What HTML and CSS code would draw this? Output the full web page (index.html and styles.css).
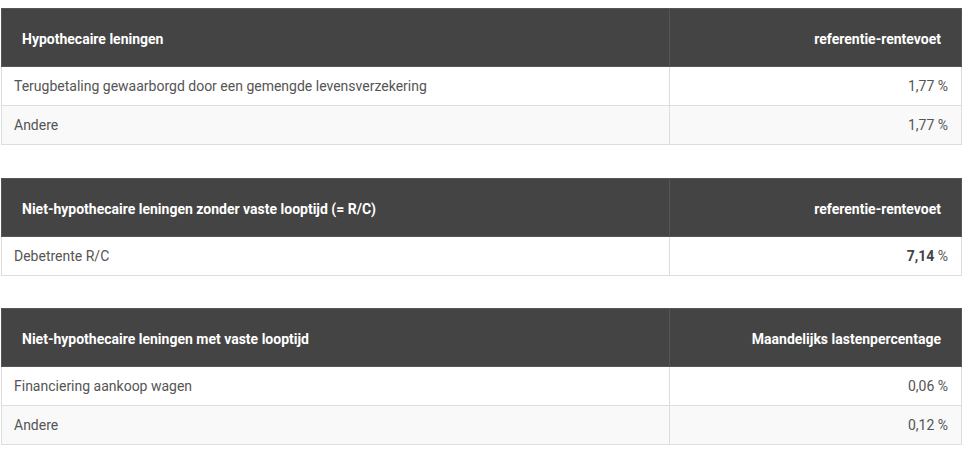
FILE: index.html
```html
<!DOCTYPE html>
<html lang="nl">
<head>
<meta charset="utf-8">
<link rel="stylesheet" href="styles.css">
</head>
<body>
<div class="page">
  <table class="rates rates-first">
    <colgroup><col class="c1"><col class="c2"></colgroup>
    <thead>
      <tr><th>Hypothecaire leningen</th><th class="num">referentie-rentevoet</th></tr>
    </thead>
    <tbody>
      <tr><td>Terugbetaling gewaarborgd door een gemengde levensverzekering</td><td class="num">1,77 %</td></tr>
      <tr><td>Andere</td><td class="num">1,77 %</td></tr>
    </tbody>
  </table>

  <table class="rates">
    <colgroup><col class="c1"><col class="c2"></colgroup>
    <thead>
      <tr><th>Niet-hypothecaire leningen zonder vaste looptijd (= R/C)</th><th class="num">referentie-rentevoet</th></tr>
    </thead>
    <tbody>
      <tr><td>Debetrente R/C</td><td class="num"><strong>7,14</strong> %</td></tr>
    </tbody>
  </table>

  <table class="rates">
    <colgroup><col class="c1"><col class="c2"></colgroup>
    <thead>
      <tr><th>Niet-hypothecaire leningen met vaste looptijd</th><th class="num">Maandelijks lastenpercentage</th></tr>
    </thead>
    <tbody>
      <tr><td>Financiering aankoop wagen</td><td class="num">0,06 %</td></tr>
      <tr><td>Andere</td><td class="num">0,12 %</td></tr>
    </tbody>
  </table>
</div>
</body>
</html>
```
FILE: styles.css
```css
html, body {
  margin: 0;
  padding: 0;
  background: #fff;
}
body {
  font-family: Roboto, "Liberation Sans", Arial, sans-serif;
  color: #555;
}
.page {
  padding: 8px 2px 0 1px;
}
.rates {
  width: 960px;
  border-collapse: collapse;
  table-layout: fixed;
  margin-bottom: 32px;
}
.rates-first {
  margin-bottom: 33px;
}
.rates .c1 { width: 668px; }
.rates .c2 { width: 292px; }
.rates th {
  background: #444;
  color: #fff;
  font-size: 14px;
  font-weight: 700;
  line-height: 20px;
  text-align: left;
  padding: 20px 20px 17px;
  border: 1px solid #555;
}
.rates td {
  font-size: 14px;
  line-height: 20px;
  padding: 9px 12px 9px;
  border: 1px solid #ddd;
}
.rates tbody tr:nth-child(even) td {
  background: #f9f9f9;
}
.rates .num {
  text-align: right;
}
.rates td.num {
  padding-right: 13px;
}
.rates strong {
  color: #444;
  font-weight: 700;
}
```
